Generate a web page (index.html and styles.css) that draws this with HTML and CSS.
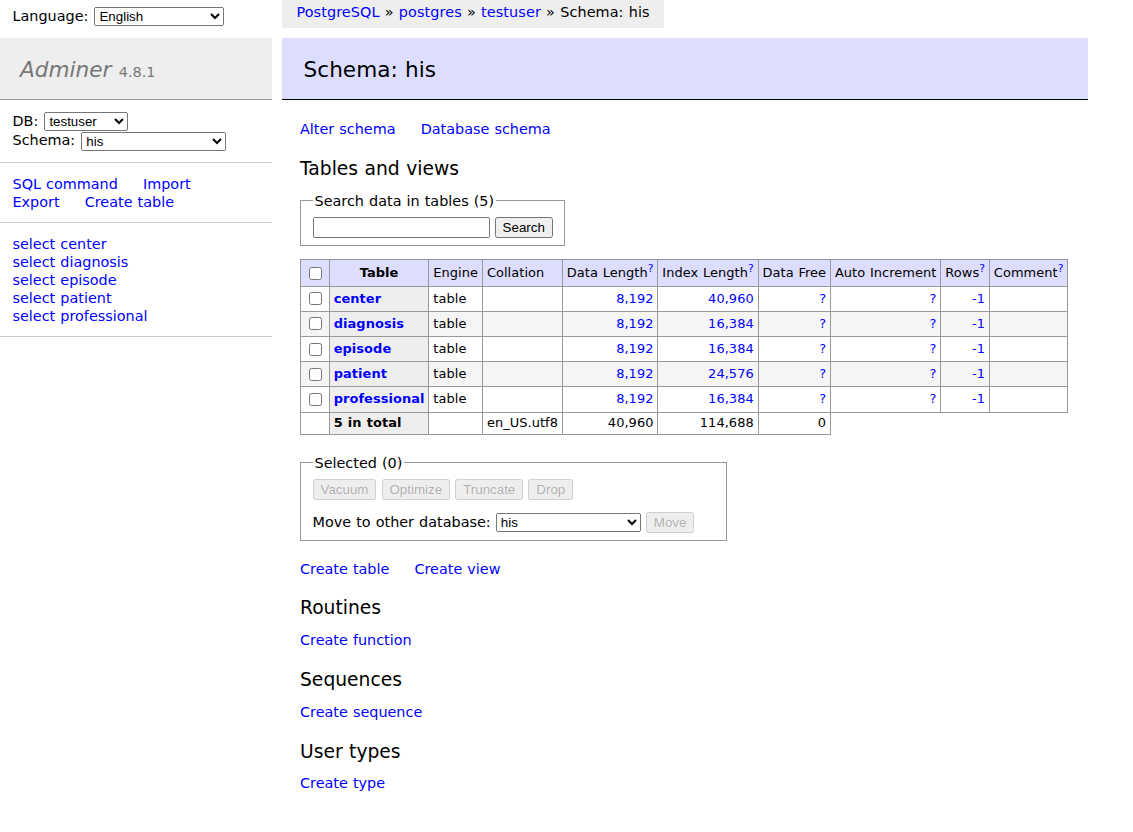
FILE: index.html
```html
<!DOCTYPE html>
<html lang="en">
<head>
<meta charset="utf-8">
<title>Schema: his - PostgreSQL - Adminer</title>
<link rel="stylesheet" href="styles.css">
</head>
<body>
<div class="page">
  <aside class="side">
    <div class="lang">Language: <select class="ctl sel-lang"><option>English</option></select></div>
    <div class="menu">
      <h1 class="brand"><a class="brand-link" href="#">Adminer</a> <span class="version">4.8.1</span></h1>
      <div class="menu-block dbs">
        <div class="dbs-row">DB: <select class="ctl sel-db"><option>testuser</option></select></div>
        <div class="dbs-row">Schema: <select class="ctl sel-schema"><option>his</option></select></div>
      </div>
      <p class="menu-block links"><a href="#">SQL command</a> <a href="#">Import</a> <a href="#">Export</a> <a href="#">Create table</a></p>
      <ul class="menu-block tables">
        <li><a href="#">select center</a></li>
        <li><a href="#">select diagnosis</a></li>
        <li><a href="#">select episode</a></li>
        <li><a href="#">select patient</a></li>
        <li><a href="#">select professional</a></li>
      </ul>
    </div>
  </aside>

  <main class="main">
    <div class="breadcrumb"><a href="#">PostgreSQL</a> » <a href="#">postgres</a> » <a href="#">testuser</a> » Schema: his</div>
    <div class="content">
      <h2 class="title">Schema: his</h2>
      <p class="links"><a href="#">Alter schema</a> <a href="#">Database schema</a></p>
      <h3 class="section">Tables and views</h3>
      <form class="search-form">
        <fieldset class="fs">
          <legend>Search data in tables (5)</legend>
          <div><input type="search" class="ctl search-input"> <input type="submit" class="ctl btn" value="Search"></div>
        </fieldset>
      </form>
      <table class="tbl">
        <thead>
          <tr>
            <td><input type="checkbox" class="chk"></td>
            <th>Table</th>
            <td>Engine</td>
            <td>Collation</td>
            <td>Data Length<a href="#"><sup>?</sup></a></td>
            <td>Index Length<a href="#"><sup>?</sup></a></td>
            <td>Data Free</td>
            <td>Auto Increment</td>
            <td>Rows<a href="#"><sup>?</sup></a></td>
            <td>Comment<a href="#"><sup>?</sup></a></td>
          </tr>
        </thead>
        <tbody>
          <tr>
            <td><input type="checkbox" class="chk"></td>
            <th><a href="#">center</a></th>
            <td>table</td><td></td>
            <td class="num"><a href="#">8,192</a></td>
            <td class="num"><a href="#">40,960</a></td>
            <td class="num"><a href="#">?</a></td>
            <td class="num"><a href="#">?</a></td>
            <td class="num"><a href="#">-1</a></td>
            <td></td>
          </tr>
          <tr class="odd">
            <td><input type="checkbox" class="chk"></td>
            <th><a href="#">diagnosis</a></th>
            <td>table</td><td></td>
            <td class="num"><a href="#">8,192</a></td>
            <td class="num"><a href="#">16,384</a></td>
            <td class="num"><a href="#">?</a></td>
            <td class="num"><a href="#">?</a></td>
            <td class="num"><a href="#">-1</a></td>
            <td></td>
          </tr>
          <tr>
            <td><input type="checkbox" class="chk"></td>
            <th><a href="#">episode</a></th>
            <td>table</td><td></td>
            <td class="num"><a href="#">8,192</a></td>
            <td class="num"><a href="#">16,384</a></td>
            <td class="num"><a href="#">?</a></td>
            <td class="num"><a href="#">?</a></td>
            <td class="num"><a href="#">-1</a></td>
            <td></td>
          </tr>
          <tr class="odd">
            <td><input type="checkbox" class="chk"></td>
            <th><a href="#">patient</a></th>
            <td>table</td><td></td>
            <td class="num"><a href="#">8,192</a></td>
            <td class="num"><a href="#">24,576</a></td>
            <td class="num"><a href="#">?</a></td>
            <td class="num"><a href="#">?</a></td>
            <td class="num"><a href="#">-1</a></td>
            <td></td>
          </tr>
          <tr>
            <td><input type="checkbox" class="chk"></td>
            <th><a href="#">professional</a></th>
            <td>table</td><td></td>
            <td class="num"><a href="#">8,192</a></td>
            <td class="num"><a href="#">16,384</a></td>
            <td class="num"><a href="#">?</a></td>
            <td class="num"><a href="#">?</a></td>
            <td class="num"><a href="#">-1</a></td>
            <td></td>
          </tr>
          <tr class="sum">
            <td></td>
            <th>5 in total</th>
            <td></td>
            <td>en_US.utf8</td>
            <td class="num">40,960</td>
            <td class="num">114,688</td>
            <td class="num">0</td>
          </tr>
        </tbody>
      </table>

      <div class="footer">
        <fieldset class="fs fs-footer">
          <legend>Selected (0)</legend>
          <div>
            <input type="submit" class="ctl btn" value="Vacuum" disabled> <input type="submit" class="ctl btn" value="Optimize" disabled> <input type="submit" class="ctl btn" value="Truncate" disabled> <input type="submit" class="ctl btn" value="Drop" disabled>
            <p class="move">Move to other database: <select class="ctl sel-move"><option>his</option></select> <input type="submit" class="ctl btn" value="Move" disabled></p>
          </div>
        </fieldset>
      </div>

      <p class="links"><a href="#">Create table</a> <a href="#">Create view</a></p>
      <h3 class="section">Routines</h3>
      <p class="links"><a href="#">Create function</a></p>
      <h3 class="section">Sequences</h3>
      <p class="links"><a href="#">Create sequence</a></p>
      <h3 class="section">User types</h3>
      <p class="links"><a href="#">Create type</a></p>
    </div>
  </main>
</div>
</body>
</html>
```

FILE: styles.css
```css
html, body {
  margin: 0;
  background: #fff;
}

body {
  color: #000;
  font: 14.4px/1.25 "DejaVu Sans", Verdana, sans-serif;
  word-spacing: 0.5px;
}

a {
  color: #00f;
  text-decoration: none;
}

.page {
  display: flex;
  align-items: flex-start;
}

/* ---------- sidebar ---------- */
.side {
  flex: none;
  width: 272px;
}

.lang {
  height: 28px;
  box-sizing: border-box;
  padding: 3.5px 12.5px 0;
  line-height: 25.92px;
  white-space: nowrap;
}

.menu {
  margin-top: 10px;
}

.brand {
  margin: 0;
  padding: 19px 20px 15px 20px;
  font-size: 21.6px;
  line-height: 1.25;
  font-weight: normal;
  background: #eee;
  border-bottom: 1px solid #999;
}

.brand-link {
  color: #777;
  font-style: italic;
}

.version {
  color: #777;
  font-size: 67%;
}

.menu-block {
  margin: 0;
  padding: 11.52px 12.5px;
  border-bottom: 1px solid #ccc;
}

.tables {
  list-style: none;
  white-space: nowrap;
}

.links a {
  white-space: nowrap;
  margin-right: 20px;
}

/* ---------- form controls ---------- */
.ctl {
  font: 13.33px "Liberation Sans", Arial, sans-serif;
  word-spacing: normal;
  vertical-align: middle;
}

.sel-lang {
  width: 130px;
  margin-left: 1px;
}

.sel-db {
  width: 84px;
  margin-left: 1px;
}

.sel-schema {
  width: 145px;
  margin-left: 1px;
}

.sel-move {
  width: 145px;
}

.search-input {
  width: 177px;
  box-sizing: border-box;
}

.chk {
  vertical-align: middle;
}

/* ---------- main ---------- */
.main {
  margin-left: 28px;
  padding: 0 20px 20px 0;
}

.breadcrumb {
  width: fit-content;
  margin-left: -18px;
  padding: 0 14.4px;
  height: 28px;
  line-height: 25.92px;
  background: #eee;
  white-space: nowrap;
  letter-spacing: 0.1px;
}

.content {
  padding-top: 10px;
}

.title {
  margin: 0 0 20px -18px;
  padding: 19px 21.6px 15px;
  font-size: 21.6px;
  line-height: 1.25;
  font-weight: normal;
  background: #ddf;
  border-bottom: 1px solid #000;
}

p {
  margin: 11.52px 20px 0 0;
}

.section {
  margin: 18.72px 0 0;
  font-size: 18.72px;
  line-height: 1.25;
  font-weight: normal;
}

form {
  margin: 0;
}

.fs {
  display: inline-block;
  vertical-align: top;
  margin: 11.52px 7.2px 0 0;
  padding: 7.2px 11.52px;
  border: 1px solid #999;
  min-inline-size: auto;
}

.fs legend {
  padding: 0 2px;
}

/* ---------- table ---------- */
.tbl {
  margin: 12.96px 20px 0 0;
  border-collapse: collapse;
  font-size: 12.96px;
  line-height: 1.25;
  white-space: pre;
  letter-spacing: 0.06px;
}

.tbl td,
.tbl th {
  border: 1px solid #999;
  padding: 2.6px 3.9px;
}

.tbl th {
  background: #eee;
  text-align: left;
}

.tbl thead td,
.tbl thead th {
  background: #ddf;
  vertical-align: baseline;
  padding-top: 1.8px;
}

.tbl thead th {
  text-align: center;
  padding-left: 6.5px;
  padding-right: 6.5px;
}

.tbl thead .chk {
  vertical-align: middle;
}

.tbl tr.odd td {
  background: #f5f5f5;
}

.tbl .num {
  text-align: right;
}

/* ---------- footer ---------- */
.footer {
  margin-top: 19px;
  padding-bottom: 7.2px;
}

.fs-footer {
  margin-top: 0;
}
```
